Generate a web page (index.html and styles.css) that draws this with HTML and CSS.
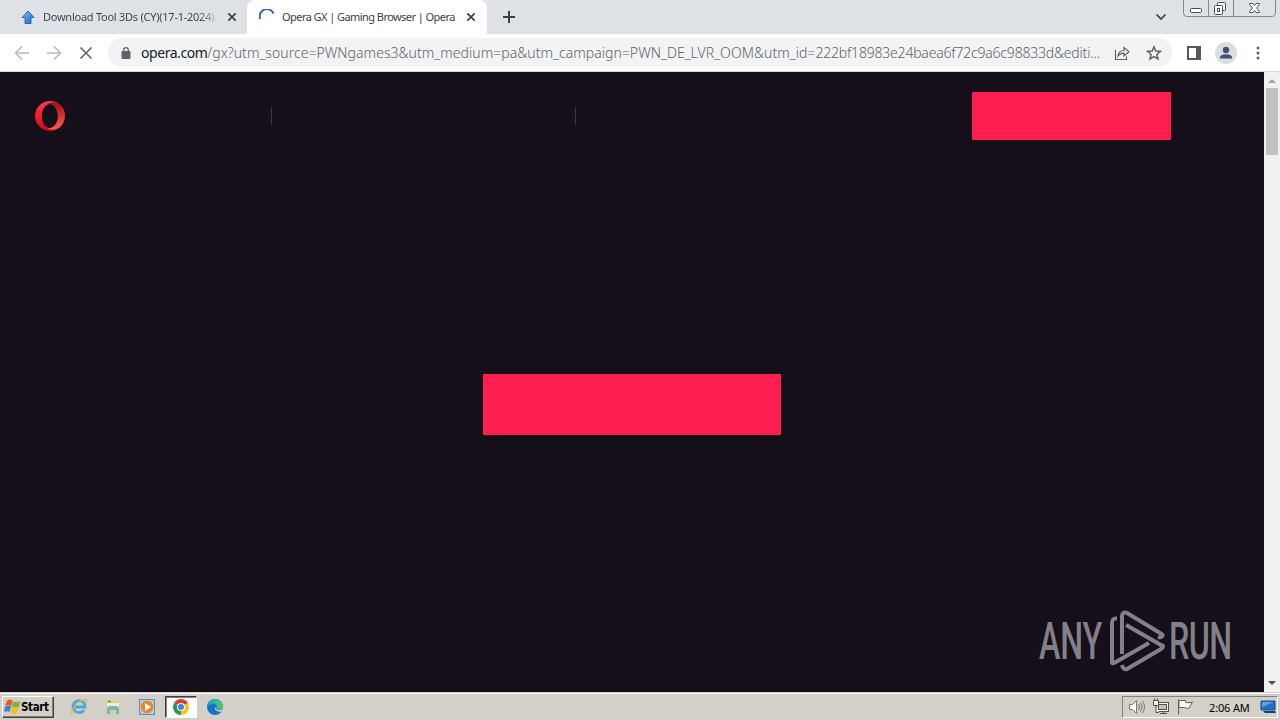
FILE: index.html
```html
<!DOCTYPE html>
<html lang="en">
  <head>
    <meta charset="UTF-8" />
    <meta name="viewport" content="width=device-width, initial-scale=1.0" />
    <title>Opera GX | Gaming Browser | Opera</title>
    <link rel="stylesheet" href="styles.css">
  </head>
  <body>
    <!-- tabs -->
    <div class="tabs">
      <div class="tab">
        <svg class="favicon" width="16" height="16" viewBox="0 0 16 16">
          <defs>
            <linearGradient id="arrow" x1="0" y1="0" x2="1" y2="1">
              <stop offset="0" stop-color="#7cc0fa" />
              <stop offset="1" stop-color="#1762c4" />
            </linearGradient>
          </defs>
          <path d="M8 2 L14 8.5 H11 V14.5 H5 V8.5 H2 Z" fill="url(#arrow)" stroke="#2868b4" stroke-width="1" />
        </svg>
        <span class="tab-title first-title">Download Tool 3Ds (CY)(17-1-2024).</span>
        <svg class="close" width="10" height="10" viewBox="0 0 10 10"><path d="M1.3 1.3 L8.7 8.7 M8.7 1.3 L1.3 8.7" /></svg>
      </div>
      <div class="tab active">
        <svg class="favicon" width="16" height="16" viewBox="0 0 16 16">
          <path d="M1.2 10 A7 7 0 0 1 14.5 4.6" fill="none" stroke="#2464c8" stroke-width="2" />
        </svg>
        <span class="tab-title second-title">Opera GX | Gaming Browser | Opera</span>
        <svg class="close" width="10" height="10" viewBox="0 0 10 10"><path d="M1.3 1.3 L8.7 8.7 M8.7 1.3 L1.3 8.7" /></svg>
      </div>
      <svg class="new-tab" width="12" height="12" viewBox="0 0 12 12"><path d="M6 0 V12 M0 6 H12" stroke="#3c4043" stroke-width="2" /></svg>
      <svg class="chevron" width="12" height="8" viewBox="0 0 12 8"><path d="M1.5 1.5 L6 6 L10.5 1.5" fill="none" stroke="#3c4043" stroke-width="1.700" /></svg>
      <div class="window-buttons">
        <svg width="93" height="17" viewBox="0 0 93 17">
          <path d="M0.5 0 V13 Q0.5 16.5 4 16.5 H89 Q92.5 16.5 92.5 13 V0 M25.5 0 V16 M50.5 0 V16" fill="none" stroke="#85888f" />
          <rect x="7.5" y="8.5" width="11" height="4" rx="1" fill="#fff" stroke="#4c4f57" />
          <rect x="34.5" y="2.5" width="8" height="8" rx="1" fill="#f2f3f5" stroke="#4c4f57" />
          <rect x="31.5" y="5.5" width="8" height="9" rx="1" fill="#fff" stroke="#4c4f57" />
          <rect x="34.5" y="8.5" width="2" height="3" fill="#fff" stroke="#4c4f57" />
          <path d="M66.5 3.5 H70 L71.500 5.500 L73 3.500 H76.500 V4.500 L73.500 8 L76.500 11.500 V12.500 H73 L71.500 10.500 L70 12.500 H66.500 V11.500 L69.500 8 L66.500 4.500 Z" fill="#fff" stroke="#4c4f57" />
        </svg>
      </div>
    </div>

    <!-- toolbar -->
    <div class="toolbar">
      <svg class="nav" width="16" height="16" viewBox="0 0 16 16"><path d="M15 8 H2 M8 1.500 L1.500 8 L8 14.500" stroke="#b9bbbe" /></svg>
      <svg class="nav" width="16" height="16" viewBox="0 0 16 16"><path d="M1 8 H14 M8 1.500 L14.500 8 L8 14.500" stroke="#b9bbbe" /></svg>
      <svg class="nav" width="16" height="16" viewBox="0 0 16 16"><path d="M2.500 2.500 L13.500 13.500 M13.500 2.500 L2.500 13.500" stroke="#5f6368" /></svg>
      <div class="omnibox">
        <svg class="lock" width="10" height="12" viewBox="0 0 10 12">
          <rect x="0.500" y="4" width="9" height="8" rx="1" fill="#5f6368" />
          <path d="M2.700 5 V3 A2.300 2.300 0 0 1 7.300 3 V5" fill="none" stroke="#5f6368" stroke-width="1.300" />
        </svg>
        <span class="url"><b>opera.com</b>/gx?utm_source=PWNgames3&amp;utm_medium=pa&amp;utm_campaign=PWN_DE_LVR_OOM&amp;utm_id=<span class="url-id">222bf18983e24baea6f72c9a6c98833d&amp;editi...</span></span>
        <svg class="share" width="16" height="16" viewBox="0 0 16 16" fill="none" stroke="#5f6368" stroke-width="1.200">
          <path d="M1.500 5 V14.500 H12.500 V11.500" />
          <path d="M4 11 C4.500 7 7 5.500 10 5.500 V2.500 L15 6.800 L10 11 V8.200 C7.500 8.200 5.500 9 4 11 Z" />
        </svg>
        <svg class="star" width="16" height="16" viewBox="0 0 16 16"><path d="M8 1.800 L9.800 6 L14.400 6.400 L10.900 9.400 L12 13.900 L8 11.500 L4 13.900 L5.100 9.400 L1.600 6.400 L6.200 6 Z" fill="none" stroke="#5f6368" stroke-width="1.500" /></svg>
      </div>
      <svg class="side-panel" width="14" height="14" viewBox="0 0 14 14"><path d="M0 0 H14 V14 H0 Z M2 2 V12 H9 V2 Z" fill="#55585c" fill-rule="evenodd" /></svg>
      <svg class="profile" width="22" height="22" viewBox="0 0 22 22">
        <circle cx="11" cy="11" r="11" fill="#dadde2" />
        <circle cx="11" cy="8" r="3.200" fill="#47536e" />
        <path d="M5 16.500 V15.500 C5 13 9 12.300 11 12.300 S17 13 17 15.500 V16.500 Z" fill="#47536e" />
      </svg>
      <svg class="menu" width="4" height="14" viewBox="0 0 4 14" fill="#5f6368"><circle cx="2" cy="2" r="1.500" /><circle cx="2" cy="7" r="1.500" /><circle cx="2" cy="12" r="1.500" /></svg>
    </div>

    <!-- page -->
    <div class="viewport">
      <div class="page">
        <div class="page-header">
          <svg class="opera-logo" width="30" height="30" viewBox="0 0 30 30">
            <defs>
              <linearGradient id="ring" x1="0" y1="0" x2="0" y2="1">
                <stop offset="0" stop-color="#ff3a49" />
                <stop offset="0.500" stop-color="#f01c2e" />
                <stop offset="1" stop-color="#c8091d" />
              </linearGradient>
              <linearGradient id="ring-side" x1="0" y1="0" x2="0" y2="1">
                <stop offset="0" stop-color="#a80c12" />
                <stop offset="1" stop-color="#ff5b55" />
              </linearGradient>
            </defs>
            <path d="M15 0 A15 15 0 1 0 15 30 A15 15 0 1 0 15 0 Z M15 3 C19.500 3 23 8 23 15 S19.500 27 15 27 S7 22 7 15 S10.500 3 15 3 Z" fill="url(#ring)" fill-rule="evenodd" />
            <path d="M12 3.500 C16 .500 21 .500 25 4 A15 15 0 0 1 25 26 C21 29.500 16 29.500 12 26.500 C18 29 23 22 23 15 S18 1 12 3.500 Z" fill="url(#ring-side)" />
          </svg>
          <span class="divider"></span>
          <span class="divider"></span>
          <div class="header-button"></div>
        </div>
        <div class="main-button"></div>
        <div class="watermark">
          <svg width="200" height="70" viewBox="0 0 200 70">
            <text class="mark-text" transform="translate(4 54) scale(.62 1)" textLength="102" x="0" y="0">ANY</text>
            <g fill="none" stroke="#83808a" stroke-width="4" stroke-linejoin="round" stroke-linecap="butt">
              <path d="M82 13.500 Q77 13 77 18 V57 Q77 59 79 58 L114 38" />
              <path d="M87 49 V12 Q87 6 92 8 L125 28 Q129 30 127 31 Q126 33 123 32" />
              <path d="M91 20 L126 40 Q130 41 126 44 L92 64 Q88 65 87 60" />
            </g>
            <text class="mark-text" transform="translate(134 54) scale(.62 1)" textLength="102" x="0" y="0">RUN</text>
          </svg>
        </div>
      </div>
      <div class="scrollbar">
        <svg width="16" height="16" viewBox="0 0 16 16"><path d="M4 11 L8 7 L12 11 Z" fill="#a3a3a3" /></svg>
        <div class="thumb"></div>
        <svg class="down" width="16" height="17" viewBox="0 0 16 17"><path d="M4 6 L8 10 L12 6 Z" fill="#505050" /></svg>
      </div>
    </div>

    <!-- taskbar -->
    <div class="taskbar">
      <div class="start">
        <svg width="17" height="16" viewBox="0 0 17 16">
          <path d="M3 1.500 Q6 -.5 8.500 1.500 L7.200 7 Q4 5.500 1.200 7 Z" fill="#e9562a" />
          <path d="M9 2 Q12 4 16.500 2 L15 8 Q11 9.500 7.800 7.500 Z" fill="#7fb53c" />
          <path d="M1 7.500 Q4 6 7 7.500 L5.500 13 Q3 11.500 0 13 Z" fill="#3f7fd0" />
          <path d="M7.600 8 Q11 10 14.700 8.600 L13 14.500 Q9 15.500 6 13.500 Z" fill="#f6bd25" />
        </svg>
        <span>Start</span>
      </div>
      <div class="task">
        <svg width="18" height="18" viewBox="0 0 18 18">
          <path d="M14 12 A6 6 0 1 1 15 9 H5" fill="none" stroke="#45a8de" stroke-width="2.800" />
          <path d="M3 16 C-1 17 3 8 9 4 S18 1 16 5" fill="none" stroke="#e6b83c" stroke-width="1.300" />
        </svg>
      </div>
      <div class="task">
        <svg width="18" height="18" viewBox="0 0 18 18">
          <path d="M2 2 H7 L8 4 H16 V15 H2 Z" fill="#e8cc7c" />
          <path d="M3 5 H15 V10 H3 Z" fill="#f9efb8" />
          <path d="M3 16 V11 Q3 8 6 8 H12 Q15 8 15 11 V16 H12 V12 H6 V16 Z" fill="#70b4d4" />
          <path d="M4 3.500 H7" stroke="#55a650" stroke-width="1.500" />
        </svg>
      </div>
      <div class="task">
        <svg width="18" height="18" viewBox="0 0 18 18">
          <rect x="1.500" y="1.500" width="15" height="15" fill="#a9cce8" stroke="#5b91bc" />
          <circle cx="9" cy="9" r="6.200" fill="#f58220" />
          <path d="M7 5 L13 9 L7 13 Z" fill="#fff" />
        </svg>
      </div>
      <div class="task current">
        <svg width="18" height="18" viewBox="0 0 18 18">
          <path d="M9 9 L2.100 5 A8 8 0 0 1 15.900 5 Z" fill="#e33b2e" />
          <path d="M9 9 L2.100 5 A8 8 0 0 0 9 17 Z" fill="#269b4a" />
          <path d="M9 9 L15.900 5 A8 8 0 0 1 9 17 Z" fill="#fbc318" />
          <circle cx="9" cy="9" r="4" fill="#fff" />
          <circle cx="9" cy="9" r="3" fill="#3e7ee8" />
        </svg>
      </div>
      <div class="task">
        <svg width="18" height="18" viewBox="0 0 18 18">
          <defs>
            <linearGradient id="edge" x1="0" y1="0" x2="1" y2="0">
              <stop offset="0" stop-color="#1597df" />
              <stop offset="1" stop-color="#52d15a" />
            </linearGradient>
          </defs>
          <circle cx="9" cy="9" r="8" fill="#1375c8" />
          <path d="M1 9 A8 8 0 0 1 17 9 Q16 12 12 11.500 Q10 11 11 9 Q10 5 6 6 Q2 7 1 9 Z" fill="url(#edge)" />
          <path d="M10.500 9 Q9 11 12 12 Q15 12.300 17 10.500 L16 13.500 Q12 14.500 9.500 12 Q8 9.500 10.500 9 Z" fill="#d4d0c8" />
        </svg>
      </div>
      <div class="tray">
        <svg width="18" height="18" viewBox="0 0 18 18" fill="none" stroke="#7b7872">
          <path d="M1.500 6.500 H4.500 L8.500 2.500 V15.500 L4.500 11.500 H1.500 Z" fill="#fff" />
          <path d="M10.500 6 Q12.500 9 10.500 12 M12.500 4.500 Q15.500 9 12.500 13.500 M14.500 3 Q18.500 9 14.500 15" />
        </svg>
        <svg width="18" height="18" viewBox="0 0 18 18" fill="#f7f6f3" stroke="#55524d">
          <rect x="4.500" y="4.500" width="12" height="9" />
          <rect x="6.500" y="6.500" width="8" height="5" fill="#c5c2bb" />
          <path d="M8 15.500 H15 M11.500 13.500 V15" />
          <path d="M1.500 2.500 H6.500 V7.500 H1.500 Z M4 7.500 V14.500 H7 M2.500 0.500 V2.500 M5.500 0.500 V2.500" />
        </svg>
        <svg width="18" height="18" viewBox="0 0 18 18" fill="#fff" stroke="#65625c">
          <path d="M2.500 1.500 V16.500" />
          <path d="M3 2.500 H9.500 V4.500 Q13 5.500 16.500 4 L14 8 L12.500 10.500 Q11 10.500 8.500 9.500 H3 Z" />
        </svg>
        <span class="clock">2:06 AM</span>
        <svg class="desktop" width="16" height="14" viewBox="0 0 16 14">
          <path d="M1 1 H15 V10 H1 Z" fill="#2370c4" stroke="#174f93" />
          <path d="M2 2 H14 L2 7 Z" fill="#5da4e7" />
          <path d="M3 11 H15 L16 13 H5 Z" fill="#183d70" />
        </svg>
      </div>
    </div>
  </body>
</html>
```
FILE: styles.css
```css
* {
  box-sizing: border-box;
}
body {
  margin: 0;
  width: 1280px;
  height: 720px;
  overflow: hidden;
  display: flex;
  flex-direction: column;
  font-family: "DejaVu Sans Condensed", "DejaVu Sans", sans-serif;
  color: #3c4043;
}
svg {
  display: block;
  flex-shrink: 0;
}
.tabs {
  height: 34px;
  background: #dee1e6;
  display: flex;
  align-items: flex-start;
}
.tab {
  display: flex;
  align-items: center;
  height: 34px;
  width: 247px;
  padding-left: 20px;
}
.tab.active {
  width: 240px;
  padding-left: 12px;
  background: #fff;
  border-radius: 8px 8px 0 0;
}
.tab-title {
  font-family: "Noto Sans", sans-serif;
  font-size: 11px;
  line-height: 16px;
  margin-left: 7px;
  white-space: nowrap;
}
.active .tab-title {
  margin-left: 7px;
}
.first-title {
  width: 174px;
  letter-spacing: -0.25px;
  color: transparent;
  background: linear-gradient(to right, #3c4043 90%, #c8cbd0);
  background-clip: text;
  -webkit-background-clip: text;
}
.second-title {
  width: 175px;
  letter-spacing: -0.56px;
}
.close {
  margin-left: 10px;
}
.active .close {
  margin-left: 9px;
}
.close path {
  stroke: #3c4043;
  stroke-width: 1.7;
}
.new-tab {
  margin: 11px 0 0 16px;
}
.chevron {
  margin: 13px 16px 0 auto;
}
.window-buttons {
  margin-right: 4px;
}
.toolbar {
  height: 38px;
  background: #fff;
  border-bottom: 1px solid #d5d7da;
  display: flex;
  align-items: center;
  padding-left: 14px;
}
.nav {
  margin-right: 16px;
}
.nav path {
  fill: none;
  stroke-width: 1.6;
}
.omnibox {
  display: flex;
  align-items: center;
  width: 1064px;
  height: 29px;
  margin-left: -2px;
  padding-left: 13px;
  border-radius: 15px;
  background: #f1f3f4;
}
.url {
  width: 962px;
  margin-left: 10px;
  font-family: "Noto Sans", sans-serif;
  font-size: 14px;
  font-weight: 300;
  line-height: 20px;
  letter-spacing: 0.04px;
  color: #5f6368;
  white-space: nowrap;
}
.url b {
  font-weight: 400;
  letter-spacing: -0.45px;
  color: #202124;
}
.url-id {
  letter-spacing: -0.2px;
}
.share {
  margin-left: 11px;
}
.star {
  margin-left: 16px;
}
.side-panel {
  margin-left: 15px;
}
.profile {
  margin-left: 14px;
}
.menu {
  margin-left: 19px;
}
.viewport {
  height: 620px;
  display: flex;
}
.page {
  width: 1264px;
  background: #140f18;
  display: flex;
  flex-direction: column;
}
.page-header {
  display: flex;
  align-items: center;
  height: 88px;
  padding-left: 35px;
}
.divider {
  width: 1px;
  height: 18px;
  background: #39343e;
  margin-left: 206px;
}
.divider + .divider {
  margin-left: 303px;
}
.header-button {
  width: 199px;
  height: 48px;
  margin-left: 396px;
  background: #fd1e4f;
}
.main-button {
  width: 298px;
  height: 61px;
  margin: 214px 0 0 483px;
  border-radius: 1px;
  background: #fd1e4f;
}
.watermark {
  margin: 170px 0 0 1035px;
}
.mark-text {
  font-family: Roboto, sans-serif;
  font-size: 52px;
  font-weight: 500;
  fill: #83808a;
}
.scrollbar {
  width: 16px;
  background: #f1f1f1;
  display: flex;
  flex-direction: column;
}
.thumb {
  width: 12px;
  height: 67px;
  margin-left: 2px;
  background: #c1c1c1;
}
.down {
  margin-top: auto;
}
.taskbar {
  height: 28px;
  background: #d4d0c8;
  border-top: 1px solid #d4d0c8;
  box-shadow: inset 0 1px #fff;
  display: flex;
  align-items: center;
  padding: 1px 2px 0;
}
.start {
  display: flex;
  align-items: center;
  width: 52px;
  height: 22px;
  padding-left: 1px;
  border: 1px solid;
  border-color: #fff #404040 #404040 #fff;
  box-shadow: inset -1px -1px #808080;
  font-size: 11.5px;
  font-weight: bold;
  letter-spacing: -0.35px;
  color: #000;
  margin-right: 9px;
}
.task {
  display: flex;
  align-items: center;
  justify-content: center;
  width: 32px;
  height: 22px;
  margin-right: 2px;
}
.task.current {
  background: #fff;
  border: 1px solid;
  border-color: #404040 #fff #fff #404040;
  box-shadow: inset 1px 1px #808080;
}
.tray {
  display: flex;
  align-items: center;
  width: 156px;
  height: 22px;
  margin-left: auto;
  padding-left: 5px;
  border: 1px solid;
  border-color: #808080 #fff #fff #808080;
}
.tray svg + svg {
  margin-left: 6px;
}
.clock {
  font-family: "Noto Sans", sans-serif;
  font-size: 11px;
  width: 42px;
  margin-left: 15px;
  white-space: nowrap;
  letter-spacing: -0.15px;
  color: #000;
}
.desktop {
  margin-left: 9px;
}
```
